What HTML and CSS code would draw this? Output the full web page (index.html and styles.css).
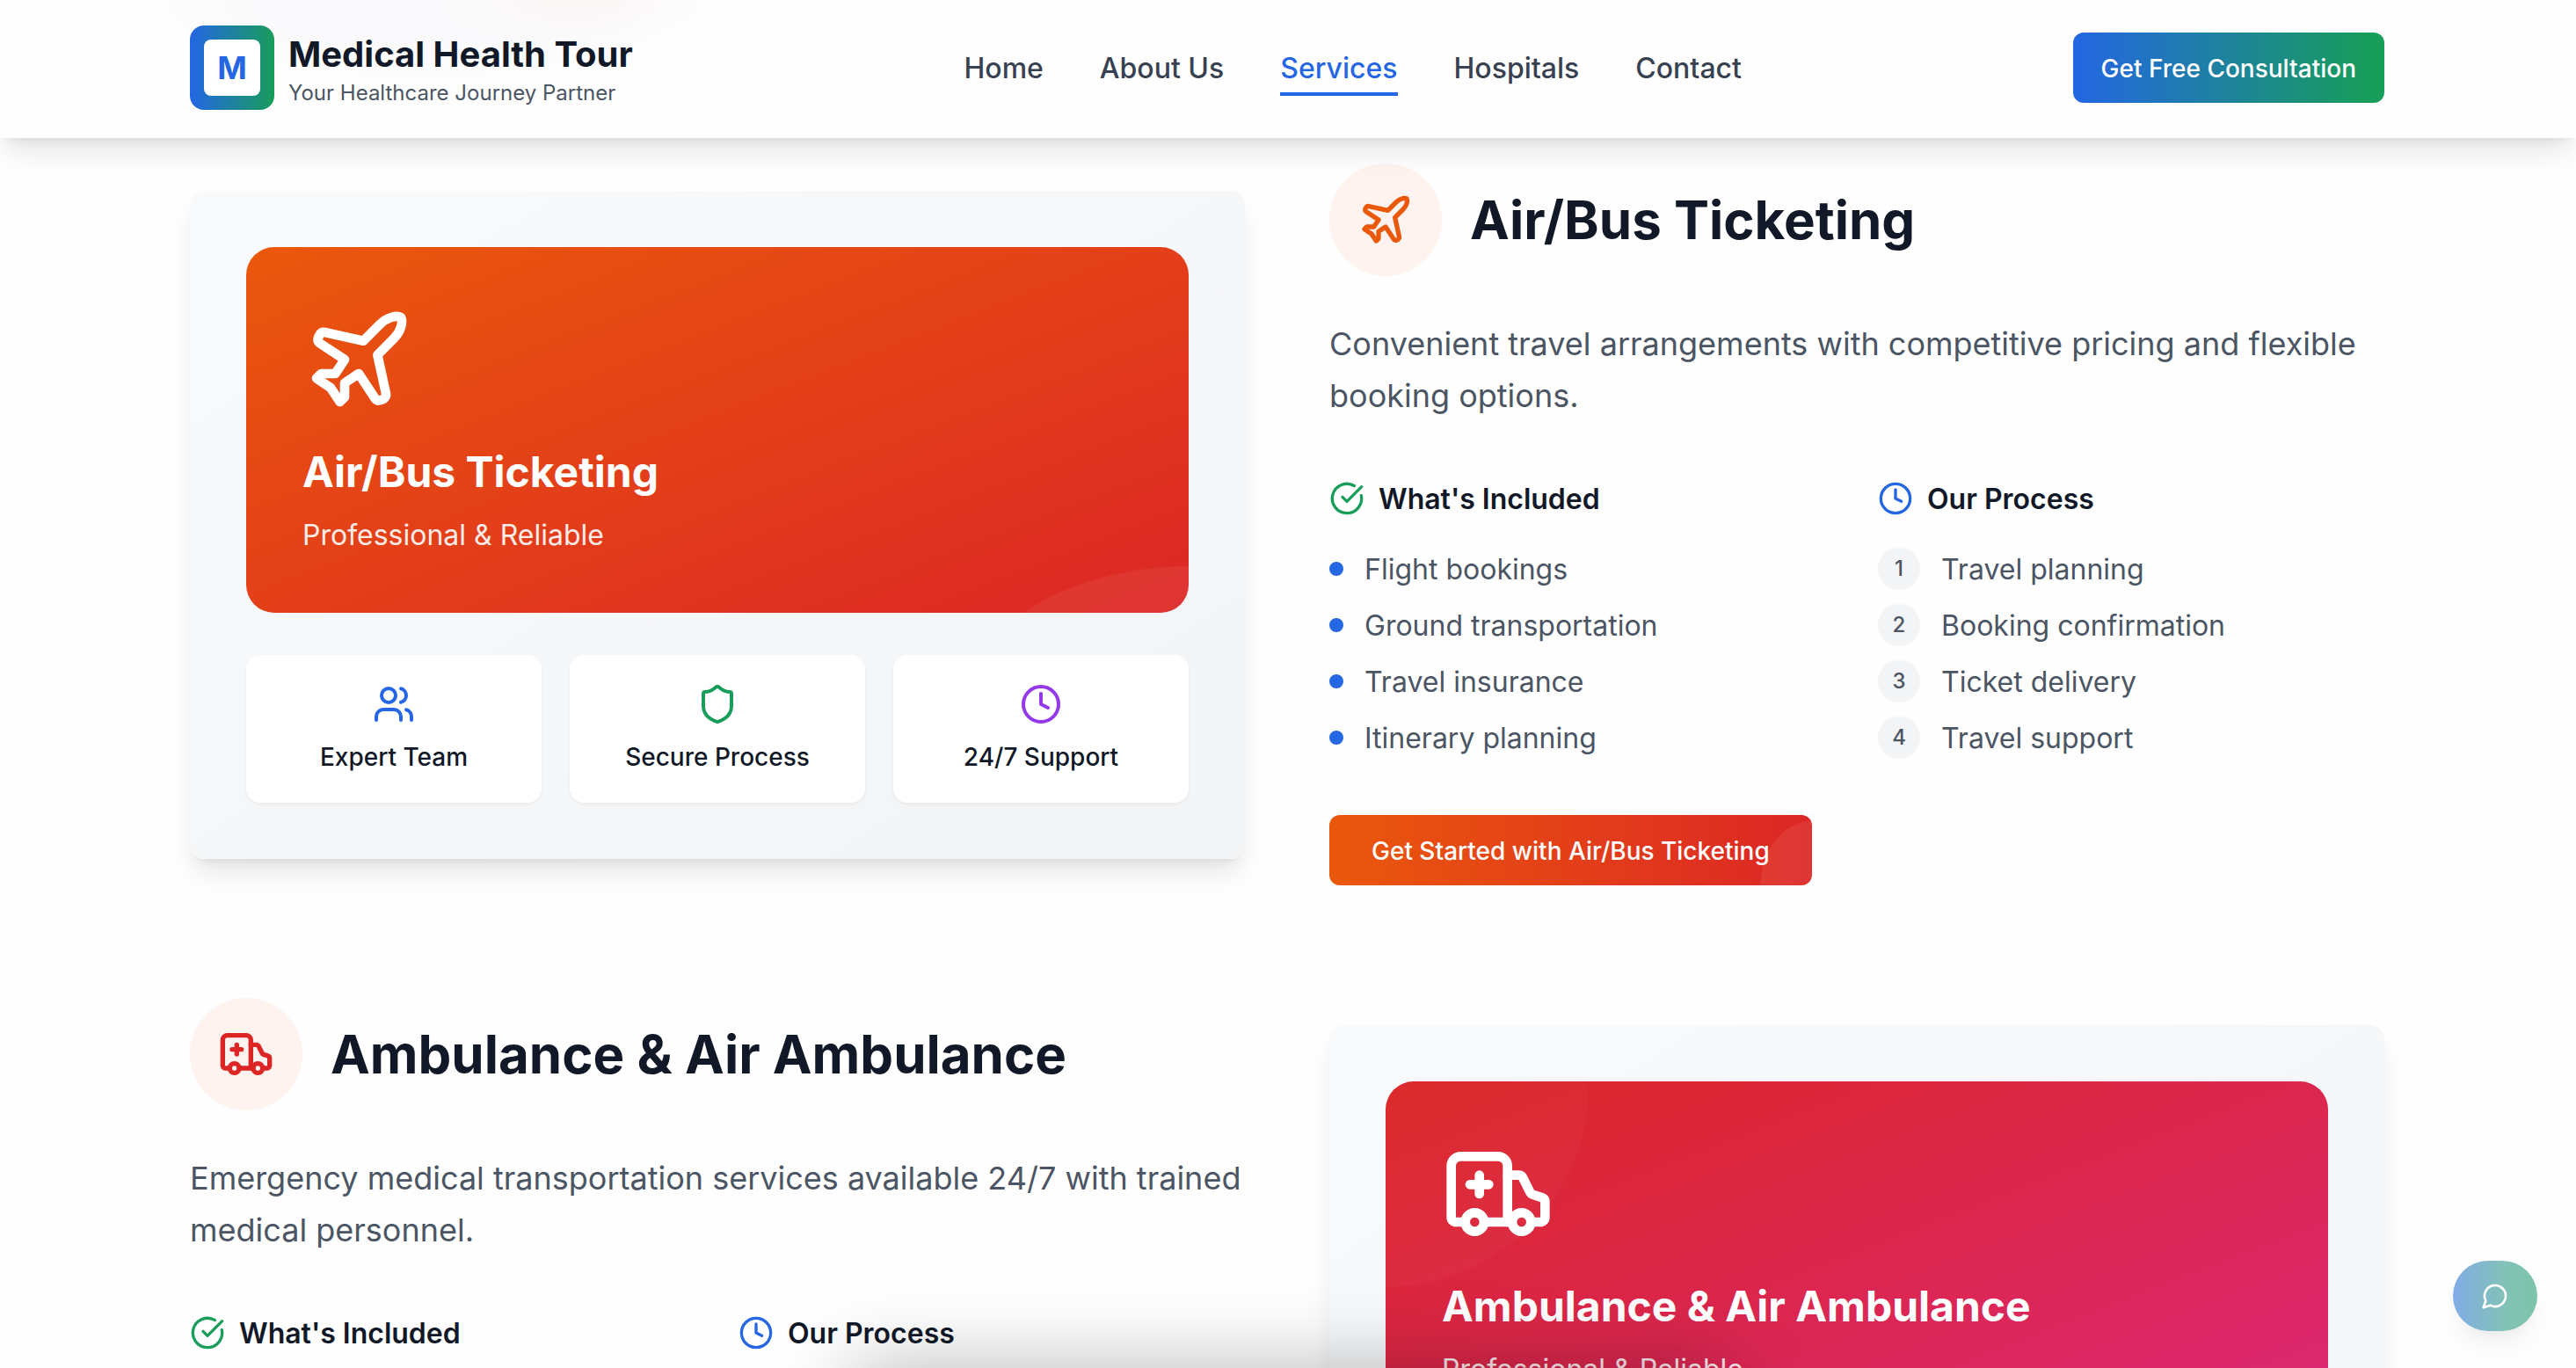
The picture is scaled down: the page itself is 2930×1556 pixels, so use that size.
FILE: index.html
```html
<!DOCTYPE html>
<html lang="en">
<head>
<meta charset="utf-8">
<title>Services - Medical Health Tour</title>
<link rel="stylesheet" href="styles.css">
</head>
<body>
<svg class="sprite" aria-hidden="true">
  <symbol id="plane" viewBox="0 0 24 24"><path d="M17.8 19.2 16 11l3.5-3.5C21 6 21.5 4 21 3c-1-.5-3 0-4.5 1.5L13 8 4.8 6.2c-.5-.1-.9.1-1.1.5l-.3.5c-.2.5-.1 1 .3 1.3L9 12l-2 3H4l-1 1 3 2 2 3 1-1v-3l3-2 3.5 5.3c.3.4.8.5 1.3.3l.5-.2c.4-.3.6-.7.5-1.2z"/></symbol>
  <symbol id="ambulance" viewBox="0 0 24 24"><path d="M10 10H6"/><path d="M14 18V6a2 2 0 0 0-2-2H4a2 2 0 0 0-2 2v11a1 1 0 0 0 1 1h2"/><path d="M19 18h2a1 1 0 0 0 1-1v-3.28a1 1 0 0 0-.684-.948l-1.923-.641a1 1 0 0 1-.578-.502l-1.539-3.076A1 1 0 0 0 16.382 8H14"/><path d="M8 8v4"/><path d="M9 18h6"/><circle cx="17" cy="18" r="2"/><circle cx="7" cy="18" r="2"/></symbol>
  <symbol id="users" viewBox="0 0 24 24"><path d="M16 21v-2a4 4 0 0 0-4-4H6a4 4 0 0 0-4 4v2"/><circle cx="9" cy="7" r="4"/><path d="M22 21v-2a4 4 0 0 0-3-3.87"/><path d="M16 3.13a4 4 0 0 1 0 7.75"/></symbol>
  <symbol id="shield" viewBox="0 0 24 24"><path d="M20 13c0 5-3.500 7.500-7.660 8.950a1 1 0 0 1-.67-.01C7.500 20.500 4 18 4 13V6a1 1 0 0 1 1-1c2 0 4.500-1.200 6.240-2.720a1.170 1.170 0 0 1 1.520 0C14.510 3.810 17 5 19 5a1 1 0 0 1 1 1z"/></symbol>
  <symbol id="clock" viewBox="0 0 24 24"><circle cx="12" cy="12" r="10"/><path d="M12 6v6l4 2"/></symbol>
  <symbol id="check" viewBox="0 0 24 24"><path d="M21.801 10A10 10 0 1 1 17 3.335"/><path d="m9 11 3 3L22 4"/></symbol>
  <symbol id="chat" viewBox="0 0 24 24"><path d="M7.900 20A9 9 0 1 0 4 16.100L2 22Z"/></symbol>
</svg>

<header class="header">
  <div class="header-inner">
    <a class="brand">
      <span class="logo"><span class="logo-mark">M</span></span>
      <span class="brand-text">
        <span class="brand-name">Medical Health Tour</span>
        <span class="brand-tag">Your Healthcare Journey Partner</span>
      </span>
    </a>
    <nav class="nav">
      <a>Home</a><a>About Us</a><a class="active">Services</a><a>Hospitals</a><a>Contact</a>
    </nav>
    <a class="button button-primary">Get Free Consultation</a>
  </div>
</header>

<main class="services">
  <section class="service">
    <div class="card">
      <div class="hero hero-orange">
        <svg class="icon hero-icon"><use href="#plane"/></svg>
        <h3>Air/Bus Ticketing</h3>
        <p>Professional &amp; Reliable</p>
      </div>
      <div class="features">
        <div class="feature"><svg class="icon blue"><use href="#users"/></svg><span>Expert Team</span></div>
        <div class="feature"><svg class="icon green"><use href="#shield"/></svg><span>Secure Process</span></div>
        <div class="feature"><svg class="icon purple"><use href="#clock"/></svg><span>24/7 Support</span></div>
      </div>
    </div>
    <div class="details">
      <div class="title-row">
        <span class="badge orange"><svg class="icon"><use href="#plane"/></svg></span>
        <h2>Air/Bus Ticketing</h2>
      </div>
      <p class="lead">Convenient travel arrangements with competitive pricing and flexible booking options.</p>
      <div class="lists">
        <div>
          <h4><svg class="icon green"><use href="#check"/></svg><span>What's Included</span></h4>
          <ul>
            <li><i class="dot"></i><span>Flight bookings</span></li>
            <li><i class="dot"></i><span>Ground transportation</span></li>
            <li><i class="dot"></i><span>Travel insurance</span></li>
            <li><i class="dot"></i><span>Itinerary planning</span></li>
          </ul>
        </div>
        <div>
          <h4><svg class="icon blue"><use href="#clock"/></svg><span>Our Process</span></h4>
          <ul>
            <li><b class="step">1</b><span>Travel planning</span></li>
            <li><b class="step">2</b><span>Booking confirmation</span></li>
            <li><b class="step">3</b><span>Ticket delivery</span></li>
            <li><b class="step">4</b><span>Travel support</span></li>
          </ul>
        </div>
      </div>
      <a class="button button-orange">Get Started with Air/Bus Ticketing</a>
    </div>
  </section>

  <section class="service">
    <div class="details">
      <div class="title-row">
        <span class="badge red"><svg class="icon"><use href="#ambulance"/></svg></span>
        <h2>Ambulance &amp; Air Ambulance</h2>
      </div>
      <p class="lead">Emergency medical transportation services available 24/7 with trained medical personnel.</p>
      <div class="lists">
        <div><h4><svg class="icon green"><use href="#check"/></svg><span>What's Included</span></h4></div>
        <div><h4><svg class="icon blue"><use href="#clock"/></svg><span>Our Process</span></h4></div>
      </div>
    </div>
    <div class="card">
      <div class="hero hero-red">
        <svg class="icon hero-icon"><use href="#ambulance"/></svg>
        <h3>Ambulance &amp; Air Ambulance</h3>
        <p>Professional &amp; Reliable</p>
      </div>
    </div>
  </section>
</main>

<div class="bottom-shadow"></div>
<a class="chat"><svg class="icon"><use href="#chat"/></svg></a>
</body>
</html>
```
FILE: styles.css
```css
:root {
  --blue: #2466e4;
  --green: #189d5a;
  --ink: #111827;
  --muted: #4b5563;
  --shadow: 0 20px 30px -6px rgba(0, 0, 0, .1), 0 8px 12px -8px rgba(0, 0, 0, .1);
}
* { box-sizing: border-box; }
html { overflow: hidden; }
body {
  margin: 0;
  height: 1556px;
  overflow: hidden;
  background: #fefefe;
  color: var(--ink);
  font: 32px/48px Inter, "Liberation Sans", sans-serif;
}
h2, h3, h4, p, ul { margin: 0; padding: 0; }
ul { list-style: none; }
.sprite { display: none; }
.icon {
  display: block;
  flex: none;
  fill: none;
  stroke: currentColor;
  stroke-width: 2;
  stroke-linecap: round;
  stroke-linejoin: round;
}
.blue { color: var(--blue); }
.green { color: var(--green); }
.purple { color: #9538ea; }
.orange { color: #ea580c; }
.red { color: #dc2626; }

.header {
  position: relative;
  z-index: 2;
  height: 157px;
  padding: 0 218px 0 216px;
  background:
    radial-gradient(ellipse 160px 50px at 660px 0, rgba(255, 240, 235, .4), transparent),
    radial-gradient(ellipse 330px 100px at 480px 0, #fafafc 60%, transparent),
    #fefefe;
  box-shadow: var(--shadow);
}
.header-inner {
  display: flex;
  align-items: center;
  justify-content: space-between;
  height: 154px;
}
.brand { display: flex; align-items: center; gap: 16px; }
.logo {
  display: flex;
  width: 96px;
  height: 96px;
  padding: 16px;
  border-radius: 16px;
  background: linear-gradient(to right, var(--blue), var(--green));
}
.logo-mark {
  flex: 1;
  border-radius: 8px;
  background: #fff;
  color: var(--blue);
  font-size: 36px;
  font-weight: 700;
  line-height: 64px;
  text-align: center;
}
.brand-text { display: flex; flex-direction: column; padding-top: 2px; }
.brand-name { font-size: 40px; font-weight: 700; line-height: 56px; }
.brand-tag { color: var(--muted); font-size: 24px; line-height: 32px; }
.nav { display: flex; gap: 64px; color: #374151; font-weight: 500; }
.nav a { height: 56px; padding-top: 5px; }
.nav .active { color: var(--blue); border-bottom: 4px solid var(--blue); height: 60px; margin-bottom: -4px; }

.button {
  display: inline-flex;
  align-items: center;
  height: 80px;
  padding-top: 2px;
  border-radius: 12px;
  color: #fff;
  font-size: 28px;
  font-weight: 500;
  line-height: 40px;
}
.button-primary { padding-inline: 32px; background: linear-gradient(to right, var(--blue), var(--green) 95%); }
.button-orange {
  margin-top: 64px;
  padding-inline: 48px;
  background:
    radial-gradient(ellipse 60px 74px at 550px 80px, rgba(255, 255, 255, .07) 98%, transparent),
    linear-gradient(to right, #ea580c, #dc2626);
}

.services {
  display: flex;
  flex-direction: column;
  gap: 128px;
  padding: 29px 218px 0 216px;
}
.service {
  display: grid;
  grid-template-columns: 1fr 1fr;
  gap: 96px;
  align-items: center;
  height: 821px;
}
.card {
  height: 760px;
  padding: 64px;
  border-radius: 16px;
  background: linear-gradient(to bottom right, #f9fafb, #f3f4f6);
  box-shadow: var(--shadow);
}
.hero {
  height: 416px;
  padding: 64px;
  border-radius: 32px;
  color: #fff;
}
.hero-orange {
  background:
    radial-gradient(ellipse 277px 198px at 1072px 560px, rgba(255, 255, 255, .06) 99%, transparent),
    linear-gradient(to bottom right, #ea580c, #dc2626);
}
.hero-red {
  background:
    radial-gradient(ellipse 232px 230px at 0 5px, rgba(255, 255, 255, .025) 99%, transparent),
    linear-gradient(to bottom right, #dc2626, #db2777);
}
.hero-icon { width: 128px; height: 128px; }
.hero h3 { margin: 32px 0 16px; font-size: 48px; font-weight: 700; line-height: 64px; }
.hero p { opacity: .9; }
.features { display: grid; grid-template-columns: repeat(3, 1fr); gap: 32px; margin-top: 48px; }
.feature {
  display: flex;
  flex-direction: column;
  align-items: center;
  gap: 16px;
  padding: 32px;
  border-radius: 16px;
  background: #fff;
  box-shadow: 0 2px 4px rgba(0, 0, 0, .05);
}
.feature .icon { width: 48px; height: 48px; }
.feature span { font-size: 28px; font-weight: 500; line-height: 40px; }

.details { align-self: start; }
.title-row { display: flex; align-items: center; gap: 32px; margin-bottom: 48px; }
.title-row h2 { font-size: 60px; font-weight: 700; line-height: 72px; }
.badge {
  display: flex;
  align-items: center;
  justify-content: center;
  width: 128px;
  height: 128px;
  border-radius: 50%;
  background: #fff3ef;
}
.badge .icon { width: 64px; height: 64px; }
.lead { margin-bottom: 64px; color: var(--muted); font-size: 36px; line-height: 58.5px; }
.lists { display: grid; grid-template-columns: 1fr 1fr; gap: 48px; }
.lists h4 { display: flex; align-items: center; gap: 16px; height: 48px; font-weight: 600; }
.lists h4 .icon { width: 40px; height: 40px; }
.lists ul { display: flex; flex-direction: column; gap: 16px; margin-top: 32px; color: var(--muted); }
.lists li { display: flex; align-items: center; gap: 24px; height: 48px; }
.lists span { padding-top: 2px; }
.dot { width: 16px; height: 16px; border-radius: 50%; background: var(--blue); }
.step {
  width: 48px;
  height: 48px;
  border-radius: 50%;
  background: #f3f4f6;
  font-size: 24px;
  font-weight: 500;
  text-align: center;
}

.bottom-shadow {
  position: absolute;
  left: 970px;
  top: 1556px;
  width: 1000px;
  height: 100px;
  box-shadow: 0 0 90px rgba(0, 0, 0, .28);
}
.chat {
  position: absolute;
  left: 2790px;
  top: 1434px;
  display: flex;
  align-items: center;
  justify-content: center;
  width: 96px;
  height: 80px;
  border-radius: 40px;
  background: linear-gradient(to right, #82ace6, #82c3b5 65%, #7cc4a8);
  box-shadow: 0 20px 30px -6px rgba(0, 0, 0, .06), 0 8px 12px -8px rgba(0, 0, 0, .06);
  color: #fff;
}
.chat .icon { width: 32px; height: 32px; }
```
